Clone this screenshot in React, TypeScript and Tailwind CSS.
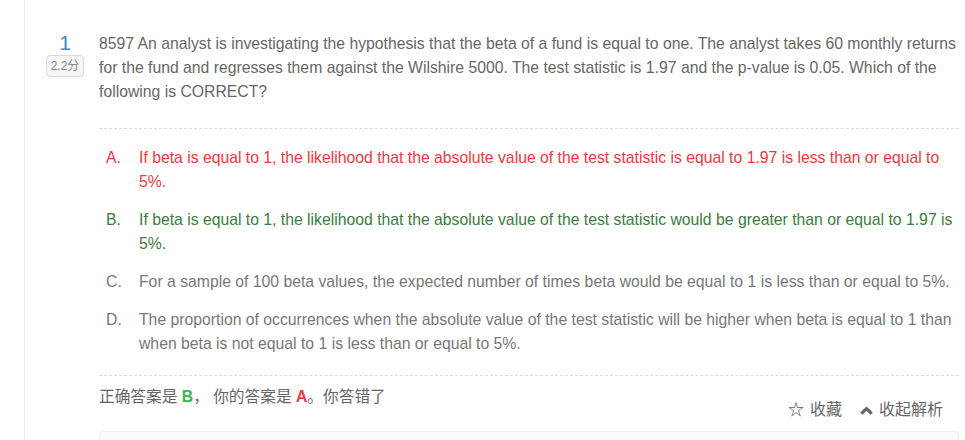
const options = [
  {
    key: "A",
    text: "If beta is equal to 1, the likelihood that the absolute value of the test statistic is equal to 1.97 is less than or equal to 5%.",
    tone: "text-[#f2383e]",
  },
  {
    key: "B",
    text: "If beta is equal to 1, the likelihood that the absolute value of the test statistic would be greater than or equal to 1.97 is 5%.",
    tone: "text-[#3a7d3c]",
  },
  {
    key: "C",
    text: "For a sample of 100 beta values, the expected number of times beta would be equal to 1 is less than or equal to 5%.",
    tone: "text-[#777]",
  },
  {
    key: "D",
    text: "The proportion of occurrences when the absolute value of the test statistic will be higher when beta is equal to 1 than when beta is not equal to 1 is less than or equal to 5%.",
    tone: "text-[#777]",
  },
];

export default function App() {
  return (
    <div
      className="h-[440px] w-[965px] overflow-hidden bg-white pl-[24px]"
      style={{ fontFamily: '"Liberation Sans", Arial, "Noto Sans CJK SC", sans-serif' }}
    >
      <div className="flex h-full border-l border-[#e6eef6] pt-[32px]">
        {/* number + score */}
        <div className="w-[74px] shrink-0 pl-[21px]">
          <div className="flex w-[38px] flex-col items-center">
            <span className="mt-[-2px] text-[21px] leading-[26px] text-[#3d8cbd]">1</span>
            <span className="mt-[-1px] flex h-[22px] w-[38px] items-center justify-center rounded-[4px] border border-[#d9d9d9] bg-[#f6f6f6] text-[12px] text-[#888]">
              2.2分
            </span>
          </div>
        </div>

        <div className="flex-1 pr-[6px]">
          <p className="text-[15.75px] leading-[24px] text-[#666]">
            8597 An analyst is investigating the hypothesis that the beta of a fund is equal to one. The analyst takes 60 monthly returns
            for the fund and regresses them against the Wilshire 5000. The test statistic is 1.97 and the p-value is 0.05. Which of the
            following is CORRECT?
          </p>

          <div className="mt-[24px] border-t border-dashed border-[#ddd] pb-[19px] pt-[17px]">
            <ul className="flex flex-col gap-[14px] pl-[7px]">
              {options.map((o) => (
                <li key={o.key} className={`flex text-[15.75px] leading-[24px] ${o.tone}`}>
                  <span className="w-[33px] shrink-0">{o.key}.</span>
                  <span>{o.text}</span>
                </li>
              ))}
            </ul>
          </div>

          <div className="flex items-start justify-between border-t border-dashed border-[#ddd] pt-[9px]">
            <p className="text-[15.7px] leading-[24px] text-[#666]">
              正确答案是 <b className="text-[#3cb54e]">B</b>，&nbsp;你的答案是 <b className="text-[#f2383e]">A</b>。你答错了
            </p>
            <div className="mr-[16px] mt-[13px] flex items-center gap-[18px] text-[16px] leading-[24px] text-[#666]">
              <span className="flex items-center gap-[6px]">
                <span className="font-bold">☆</span>
                收藏
              </span>
              <span className="flex items-center gap-[6px]">
                <svg width="13" height="9" viewBox="0 0 13 9" className="text-[#666]">
                  <path d="M1.3 7.6 L6.5 2.6 L11.7 7.6" fill="none" stroke="currentColor" strokeWidth="3.2" />
                </svg>
                收起解析
              </span>
            </div>
          </div>

          <div className="mt-[9px] h-[40px] rounded-[4px] border border-[#f0f0f0] bg-[#fafafa]" />
        </div>
      </div>
    </div>
  );
}
